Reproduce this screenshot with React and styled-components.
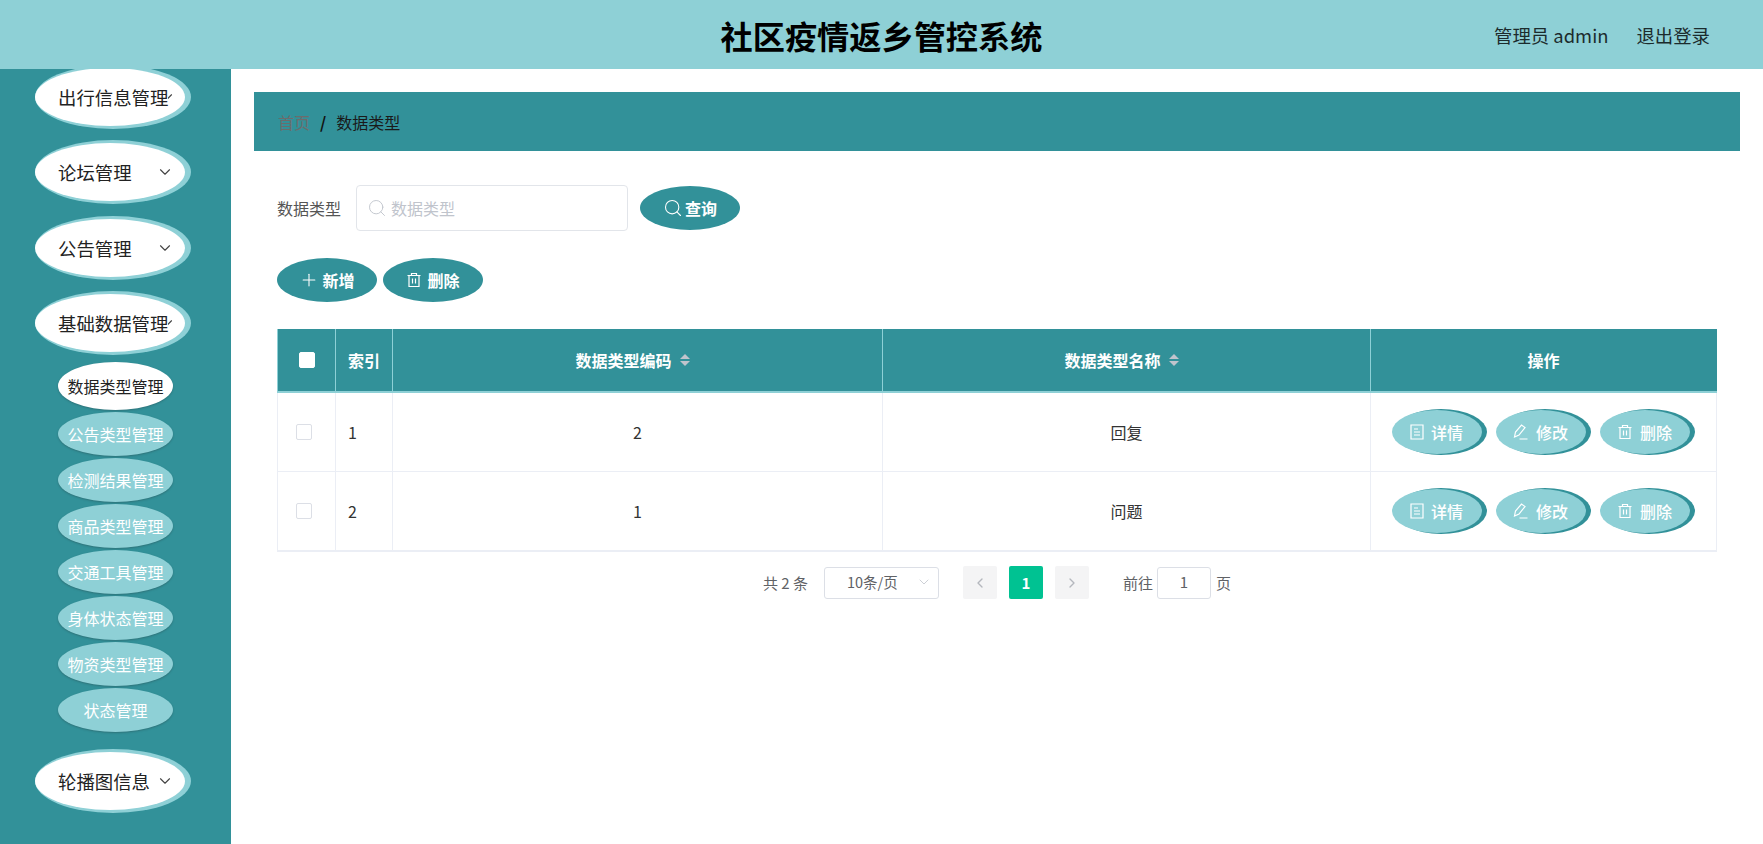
import React from "react";
import styled, { createGlobalStyle } from "styled-components";
import { Search, Plus, ChevronDown, ChevronLeft, ChevronRight } from "lucide-react";

const TEAL = "#329199";
const LIGHT = "#8ed0d6";

const GlobalStyle = createGlobalStyle`
  html, body {
    margin: 0;
    padding: 0;
    background: #fff;
    font-family: "Noto Sans CJK SC", "Noto Sans", sans-serif;
  }
  * {
    box-sizing: border-box;
  }
`;

const Page = styled.div`
  display: flex;
  flex-direction: column;
  height: 844px;
  overflow: hidden;
`;

const Header = styled.header`
  position: relative;
  display: flex;
  align-items: center;
  justify-content: flex-end;
  flex: 0 0 69px;
  padding-right: 53px;
  background: ${LIGHT};
  color: #1c2b2d;
  font-size: 18.4px;
`;

const Title = styled.h1`
  position: absolute;
  left: 0;
  right: 0;
  margin: 0;
  text-align: center;
  font-size: 32.2px;
  font-weight: 700;
  color: #000;
`;

const HeaderLink = styled.span`
  margin-left: 28px;
`;

const Body = styled.div`
  display: flex;
  flex: 1;
  min-height: 0;
`;

const Sidebar = styled.nav`
  flex: 0 0 231px;
  display: flex;
  flex-direction: column;
  align-items: flex-start;
  overflow: hidden;
  background: ${TEAL};
`;

const MenuPill = styled.div`
  display: flex;
  align-items: center;
  justify-content: space-between;
  flex: 0 0 58px;
  width: 150px;
  margin: ${(p) => p.$top}px 0 0 35px;
  padding: 0 11px 0 23px;
  border-radius: 50%;
  background: #fff;
  box-shadow: 3px 0 0 3px ${LIGHT};
  color: #222;
  font-size: 18.4px;
  white-space: nowrap;
`;

const MenuLabel = styled.span`
  position: relative;
  z-index: 1;
  background: #fff;
`;

const Caret = styled(ChevronDown)`
  flex: none;
  margin-left: -10px;
  color: #444;
`;

const SubPill = styled.div`
  display: flex;
  align-items: center;
  justify-content: center;
  flex: 0 0 ${(p) => (p.$active ? 48 : 44)}px;
  width: 115px;
  margin: ${(p) => p.$top}px 0 0 58px;
  border-radius: 50%;
  background: ${(p) => (p.$active ? "#fff" : LIGHT)};
  box-shadow: 0 1px 2px rgba(40, 70, 75, 0.4);
  color: ${(p) => (p.$active ? "#222" : "#fff")};
  font-size: 16px;
  white-space: nowrap;
`;

const Main = styled.main`
  flex: 1;
  min-width: 0;
  padding: 23px 23px 0;
`;

const Breadcrumb = styled.div`
  display: flex;
  align-items: center;
  height: 59px;
  padding-left: 24px;
  background: ${TEAL};
  font-size: 16px;
  color: #1a1a1a;
`;

const CrumbHome = styled.span`
  color: #6c6c6c;
`;

const CrumbSep = styled.span`
  margin: 0 10px;
  font-weight: 700;
  color: #111;
`;

const Content = styled.div`
  padding: 0 23px;
`;

const FormRow = styled.div`
  display: flex;
  align-items: center;
  margin-top: 34px;
`;

const FieldLabel = styled.label`
  margin-right: 15px;
  font-size: 16px;
  color: #555;
`;

const SearchField = styled.div`
  display: flex;
  align-items: center;
  gap: 4px;
  width: 272px;
  height: 46px;
  margin-right: 12px;
  padding-left: 10px;
  border: 1px solid #e2e5ea;
  border-radius: 4px;
  color: #c0c4cc;
`;

const SearchInput = styled.input`
  flex: 1;
  min-width: 0;
  border: 0;
  outline: 0;
  padding: 0;
  font: inherit;
  font-size: 16px;
  &::placeholder {
    color: #c0c4cc;
  }
`;

const ToolButton = styled.button`
  display: inline-flex;
  align-items: center;
  justify-content: center;
  gap: ${(p) => p.$gap}px;
  width: 100px;
  height: 44px;
  padding: 0;
  border: 0;
  border-radius: 50%;
  background: ${TEAL};
  color: #fff;
  font: inherit;
  font-size: 16px;
  font-weight: 700;
`;

const Toolbar = styled.div`
  display: flex;
  gap: 6px;
  margin-top: 27px;
`;

const Table = styled.div`
  margin-top: 27px;
  border-bottom: 1px solid #ebeef5;
`;

const Row = styled.div`
  display: grid;
  grid-template-columns: 58px 57px 490px 488px 347px;
  height: ${(p) => (p.$head ? 64 : 79)}px;
  background: ${(p) => (p.$head ? TEAL : "#fff")};
  color: ${(p) => (p.$head ? "#fff" : "#333")};
  font-size: 16px;
  font-weight: ${(p) => (p.$head ? 700 : 400)};
  border-bottom: ${(p) => (p.$head ? `2px solid ${LIGHT}` : "1px solid #ebeef5")};
`;

const Cell = styled.div`
  display: flex;
  align-items: center;
  justify-content: ${(p) => (p.$left ? "flex-start" : "center")};
  padding-left: ${(p) => (p.$left ? 12 : 0)}px;
  border-left: 1px solid ${(p) => (p.$head ? LIGHT : "#ebeef5")};
  &:last-child {
    border-right: 1px solid ${(p) => (p.$head ? TEAL : "#ebeef5")};
  }
`;

const Check = styled.span`
  width: 16px;
  height: 16px;
  margin-right: ${(p) => (p.$head ? 0 : 5)}px;
  border: 1px solid ${(p) => (p.$head ? "#fff" : "#dcdfe6")};
  border-radius: 2px;
  background: #fff;
`;

const SortArrows = styled.span`
  display: inline-flex;
  flex-direction: column;
  gap: 2px;
  margin: 0 10px 0 8px;
  &::before,
  &::after {
    content: "";
    border-left: 5.5px solid transparent;
    border-right: 5.5px solid transparent;
  }
  &::before {
    border-bottom: 5.5px solid #c0c4cc;
  }
  &::after {
    border-top: 5.5px solid #c0c4cc;
  }
`;

const Actions = styled.div`
  display: flex;
  gap: 14px;
  padding-right: 6px;
`;

const RowButton = styled.button`
  display: inline-flex;
  align-items: center;
  justify-content: center;
  gap: 7px;
  width: 90px;
  height: 44px;
  padding: 0;
  border: 0;
  border-radius: 50%;
  background: ${LIGHT};
  box-shadow: 4px 0 0 1px ${TEAL};
  color: #fff;
  font: inherit;
  font-size: 16px;
  font-weight: 500;
`;

const Pagination = styled.div`
  display: flex;
  align-items: center;
  justify-content: center;
  height: 33px;
  margin-top: 14px;
  font-size: 15px;
  color: #606266;
`;

const PageSelect = styled.div`
  display: flex;
  align-items: center;
  justify-content: space-between;
  width: 115px;
  height: 32px;
  margin: 0 24px 0 16px;
  padding: 0 6px 2px 22px;
  border: 1px solid #dcdfe6;
  border-radius: 3px;
  color: #606266;
  font-size: 14.5px;
  svg {
    color: #c0c4cc;
  }
`;

const PageButton = styled.div`
  display: flex;
  align-items: center;
  justify-content: center;
  width: 34px;
  height: 33px;
  margin-right: 12px;
  border-radius: 2px;
  background: ${(p) => (p.$active ? "#00c292" : "#f4f4f5")};
  color: ${(p) => (p.$active ? "#fff" : "#b4b7bd")};
  font-weight: 700;
`;

const JumpLabel = styled.span`
  margin-left: ${(p) => p.$left}px;
`;

const JumpBox = styled.div`
  display: flex;
  align-items: center;
  justify-content: center;
  width: 54px;
  height: 32px;
  margin: 0 5px 0 4px;
  padding-bottom: 2px;
  border: 1px solid #dcdfe6;
  border-radius: 3px;
`;

const TrashIcon = () => (
  <svg width="16" height="16" viewBox="0 0 16 16" fill="none" stroke="currentColor" strokeWidth="1.2">
    <path d="M1.5 3.5h13M5.5 3.5V1.5h5v2M3 3.5v11h10v-11M6.5 6.5v5M9.5 6.5v5" />
  </svg>
);

const DocIcon = () => (
  <svg width="14" height="16" viewBox="0 0 14 16" fill="none" stroke="currentColor" strokeWidth="1.2">
    <path d="M1 1h12v14H1zM4 5h4M4 8h6M4 11h6" />
  </svg>
);

const EditIcon = () => (
  <svg width="16" height="16" viewBox="0 0 16 16" fill="none" stroke="currentColor" strokeWidth="1.2">
    <path d="M1.5 13l1-5L8.5 1 12 3.5 6 11zM6.5 15h8" />
  </svg>
);

const menuBefore = [
  { label: "出行信息管理", top: -1 },
  { label: "论坛管理", top: 17 },
  { label: "公告管理", top: 18 },
  { label: "基础数据管理", top: 17 },
];

const subItems = [
  "公告类型管理",
  "检测结果管理",
  "商品类型管理",
  "交通工具管理",
  "身体状态管理",
  "物资类型管理",
  "状态管理",
];

const rows = [
  { id: 1, code: "2", name: "回复" },
  { id: 2, code: "1", name: "问题" },
];

const Menu = ({ label, top }) => (
  <MenuPill $top={top}>
    <MenuLabel>{label}</MenuLabel>
    <Caret size={18} strokeWidth={1.5} />
  </MenuPill>
);

export default function App() {
  return (
    <Page>
      <GlobalStyle />
      <Header>
        <Title>社区疫情返乡管控系统</Title>
        <HeaderLink>管理员 admin</HeaderLink>
        <HeaderLink>退出登录</HeaderLink>
      </Header>
      <Body>
        <Sidebar>
          {menuBefore.map((m) => (
            <Menu key={m.label} label={m.label} top={m.top} />
          ))}
          <SubPill $active $top={10}>数据类型管理</SubPill>
          {subItems.map((s) => (
            <SubPill key={s} $top={2}>{s}</SubPill>
          ))}
          <Menu label="轮播图信息" top={20} />
        </Sidebar>
        <Main>
          <Breadcrumb>
            <CrumbHome>首页</CrumbHome>
            <CrumbSep>/</CrumbSep>
            <span>数据类型</span>
          </Breadcrumb>
          <Content>
            <FormRow>
              <FieldLabel>数据类型</FieldLabel>
              <SearchField>
                <Search size={20} strokeWidth={1.1} />
                <SearchInput placeholder="数据类型" />
              </SearchField>
              <ToolButton $gap={2}>
                <Search size={20} strokeWidth={1.3} />
                查询
              </ToolButton>
            </FormRow>
            <Toolbar>
              <ToolButton $gap={3}>
                <Plus size={20} strokeWidth={1.3} />
                新增
              </ToolButton>
              <ToolButton $gap={5}>
                <TrashIcon />
                删除
              </ToolButton>
            </Toolbar>
            <Table>
              <Row $head>
                <Cell $head><Check $head /></Cell>
                <Cell $head $left>索引</Cell>
                <Cell $head>数据类型编码<SortArrows /></Cell>
                <Cell $head>数据类型名称<SortArrows /></Cell>
                <Cell $head>操作</Cell>
              </Row>
              {rows.map((r) => (
                <Row key={r.id}>
                  <Cell><Check /></Cell>
                  <Cell $left>{r.id}</Cell>
                  <Cell>{r.code}</Cell>
                  <Cell>{r.name}</Cell>
                  <Cell>
                    <Actions>
                      <RowButton><DocIcon />详情</RowButton>
                      <RowButton><EditIcon />修改</RowButton>
                      <RowButton><TrashIcon />删除</RowButton>
                    </Actions>
                  </Cell>
                </Row>
              ))}
            </Table>
            <Pagination>
              <span>共 2 条</span>
              <PageSelect>
                10条/页
                <ChevronDown size={16} strokeWidth={1.2} />
              </PageSelect>
              <PageButton><ChevronLeft size={16} strokeWidth={2} /></PageButton>
              <PageButton $active>1</PageButton>
              <PageButton><ChevronRight size={16} strokeWidth={2} /></PageButton>
              <JumpLabel $left={22}>前往</JumpLabel>
              <JumpBox>1</JumpBox>
              <span>页</span>
            </Pagination>
          </Content>
        </Main>
      </Body>
    </Page>
  );
}
